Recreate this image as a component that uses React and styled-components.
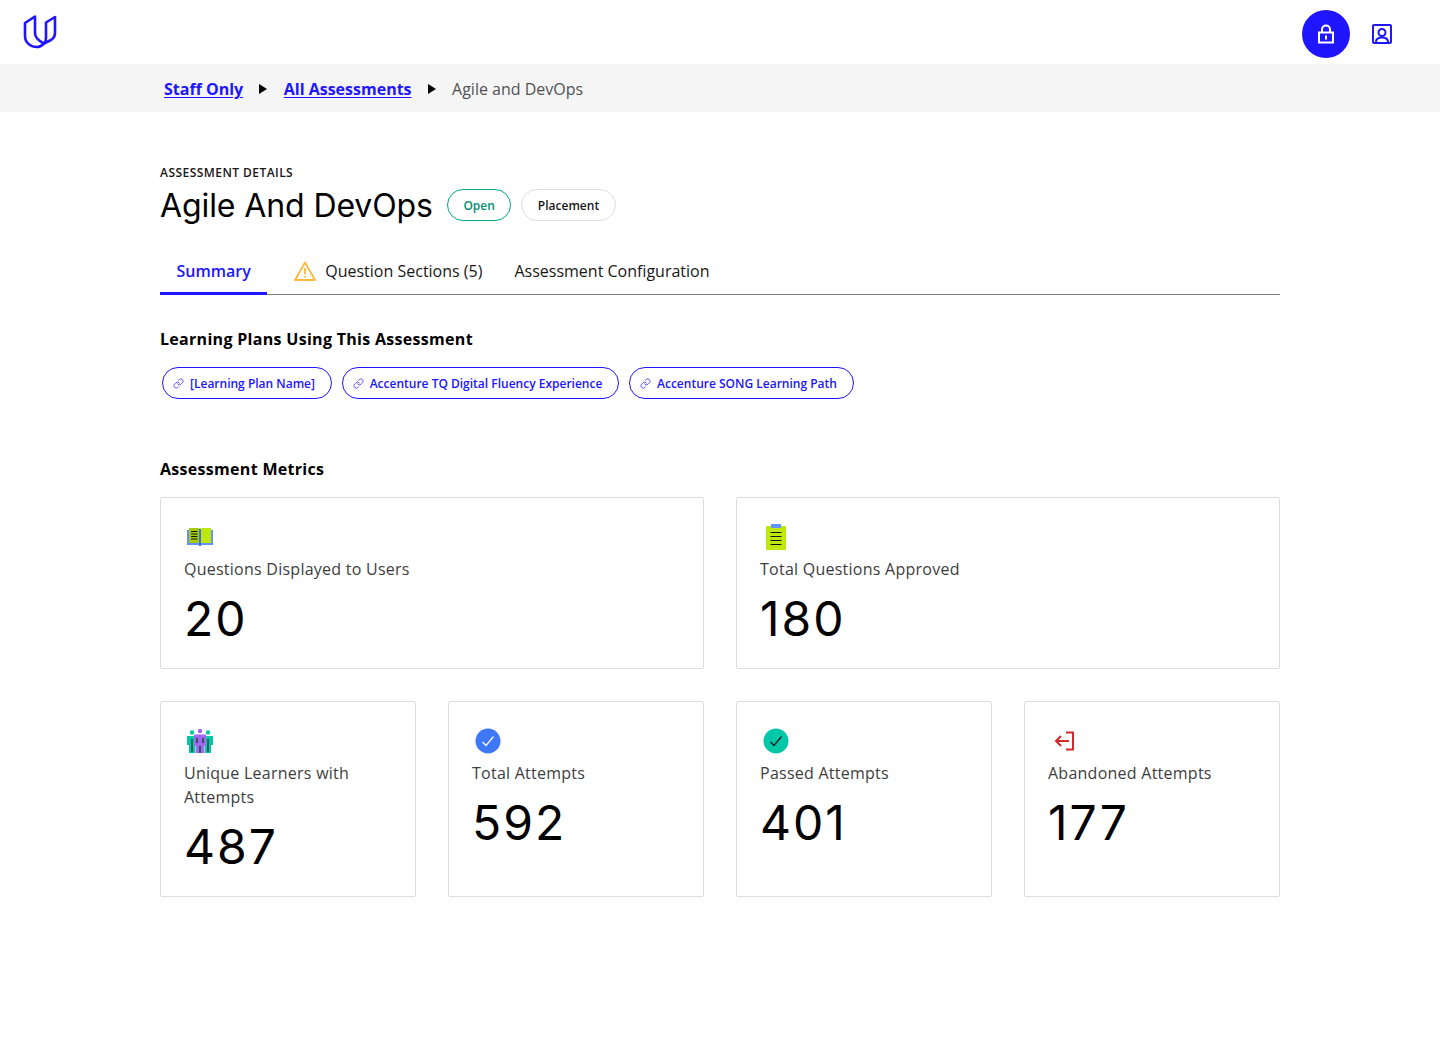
import React from "react";
import styled, { createGlobalStyle } from "styled-components";
import { Link } from "lucide-react";

const GlobalStyle = createGlobalStyle`
  html, body {
    margin: 0;
    padding: 0;
    background: #fff;
    font-family: "Open Sans", sans-serif;
    color: #000;
  }
  * { box-sizing: border-box; }
`;

const Page = styled.div`
  min-height: 1051px;
`;

const Header = styled.header`
  height: 64px;
  display: flex;
  align-items: flex-start;
  justify-content: space-between;
  padding: 10px 46px 0 22px;
`;

const Logo = styled.svg`
  width: 36px;
  height: 36px;
  margin-top: 4px;
`;

const HeaderActions = styled.div`
  display: flex;
  align-items: center;
  gap: 20px;
`;

const LockButton = styled.button`
  width: 48px;
  height: 48px;
  border: 0;
  border-radius: 50%;
  background: #2015ff;
  display: flex;
  align-items: center;
  justify-content: center;
  padding: 0;
`;

const ProfileButton = styled.button`
  width: 24px;
  height: 24px;
  border: 0;
  background: none;
  padding: 0;
  display: flex;
`;

const Breadcrumbs = styled.nav`
  height: 48px;
  background: #f5f5f5;
  display: flex;
  align-items: center;
  padding: 2px 0 0 164px;
  font-size: 16px;
`;

const Crumb = styled.a`
  color: #2015ff;
  font-weight: 700;
  text-decoration: underline;
  text-underline-offset: 2px;
`;

const CurrentCrumb = styled.span`
  color: #525252;
`;

const Arrow = styled.span`
  width: 0;
  height: 0;
  margin: 0 16.25px;
  border-style: solid;
  border-width: 5px 0 5px 8px;
  border-color: transparent transparent transparent #000;
`;

const Main = styled.main`
  width: 1120px;
  margin: 0 auto;
  padding-top: 52px;
`;

const Eyebrow = styled.div`
  font-size: 12px;
  line-height: 18px;
  letter-spacing: 0.45px;
  font-weight: 600;
  color: #171717;
`;

const TitleRow = styled.div`
  display: flex;
  align-items: center;
  gap: 10px;
  height: 46px;
`;

const Title = styled.h1`
  margin: 0 4px 0 0;
  padding-top: 2px;
  font-family: "Inter", sans-serif;
  font-size: 32px;
  font-weight: 400;
  letter-spacing: -0.1px;
  line-height: 44px;
  color: #000;
`;

const Badge = styled.span`
  height: 32px;
  display: inline-flex;
  align-items: center;
  padding: 0 15.5px;
  border-radius: 16px;
  border: 1px solid ${(p) => (p.$open ? "#02a888" : "#dedede")};
  color: ${(p) => (p.$open ? "#008f74" : "#171717")};
  font-size: 12px;
  font-weight: 600;
`;

const Tabs = styled.div`
  display: flex;
  margin-top: 21px;
  height: 46px;
  border-bottom: 1px solid #7d7d7d;
`;

const Tab = styled.div`
  height: 46px;
  padding: 0 16px 2px;
  display: flex;
  align-items: center;
  gap: 9px;
  font-size: 16px;
  color: #171717;
`;

const ActiveTab = styled(Tab)`
  padding: 0 16.5px;
  color: #2015ff;
  font-weight: 600;
  border-bottom: 3px solid #2015ff;
`;

const WarningTab = styled(Tab)`
  margin-left: 11px;
`;

const SectionTitle = styled.h2`
  margin: 0;
  font-size: 16px;
  line-height: 24px;
  font-weight: 700;
  letter-spacing: 0.3px;
  color: #000;
`;

const PlansTitle = styled(SectionTitle)`
  margin-top: 32px;
`;

const PlanRow = styled.div`
  display: flex;
  gap: 10px;
  margin-top: 16px;
  padding-left: 2px;
`;

const PlanPill = styled.a`
  height: 32px;
  display: inline-flex;
  align-items: center;
  gap: 6px;
  padding: 0 15.7px 0 10px;
  border: 1px solid #2015ff;
  border-radius: 16px;
  color: #2015ff;
  font-size: 12px;
  font-weight: 600;
`;

const MetricsTitle = styled(SectionTitle)`
  margin-top: 58px;
`;

const Grid = styled.div`
  display: grid;
  grid-template-columns: repeat(${(p) => p.$cols}, 1fr);
  gap: 32px;
  margin-top: ${(p) => p.$top}px;
`;

const Card = styled.div`
  border: 1px solid #dedede;
  border-radius: 2px;
  padding: 23px;
  height: ${(p) => p.$height}px;
`;

const IconSlot = styled.div`
  width: 32px;
  height: 32px;
  display: flex;
  align-items: center;
  justify-content: center;
`;

const CardLabel = styled.div`
  margin-top: 4px;
  font-size: 16px;
  line-height: 24px;
  letter-spacing: 0.25px;
  color: #3d3d3d;
`;

const CardValue = styled.div`
  margin-top: 10px;
  font-family: "Inter", sans-serif;
  font-size: 48px;
  line-height: 56px;
  letter-spacing: 2px;
  color: #000;
`;

const UdacityLogo = () => (
  <Logo viewBox="0 0 36 36" fill="none" stroke="#2015ff" strokeWidth="2.6" strokeLinejoin="round">
    <path d="M3 9 13 2.500V19c0 5 4 8 9 10.500-2.500 2.500-5 3.500-7 3.500C9 33 3 29 3 22Z" />
    <path d="M24 8.500 33 3v16c0 4-2 6-5 7.500l-6 3c1.500-1.500 2-3.500 2-5.500Z" />
  </Logo>
);

const LockIcon = () => (
  <svg width="18" height="20" viewBox="0 0 18 20" fill="none">
    <path d="M5 9V5.500a4 4 0 0 1 8 0V9" stroke="#fff" strokeWidth="2" />
    <rect x="2" y="8.500" width="14" height="10" fill="none" stroke="#fff" strokeWidth="2" />
    <rect x="8" y="11.500" width="2" height="4" fill="#fff" />
  </svg>
);

const ProfileIcon = () => (
  <svg width="24" height="24" viewBox="0 0 24 24" fill="none" stroke="#2015ff" strokeWidth="2">
    <rect x="3" y="3" width="18" height="18" rx="1" />
    <circle cx="12" cy="10.500" r="3.500" />
    <path d="M6 20c0-3 2.500-4.500 6-4.500s6 1.500 6 4.500" />
  </svg>
);

const WarningIcon = () => (
  <svg width="22" height="20" viewBox="0 0 22 20" fill="none">
    <path d="M11 1.500 1 19h20Z" stroke="#fbb83d" strokeWidth="1.800" strokeLinejoin="round" />
    <path d="M11 7v6.500M11 15v1.500" stroke="#fbb83d" strokeWidth="1.800" />
  </svg>
);

const BookIcon = () => (
  <svg width="28" height="20" viewBox="0 0 28 20">
    <rect x="1" y="3" width="26" height="15" fill="#6491ff" />
    <rect x="3" y="1" width="10.500" height="15" fill="#a4cc0a" />
    <rect x="14.500" y="1" width="10.500" height="15" fill="#bde80b" />
    <rect x="13" y="2" width="2" height="17" fill="#3d6fe8" />
    <path d="M5 4.500h6.500M5 7h6.500M5 9.500h6.500M5 12h6.500" stroke="#171717" strokeWidth="1.200" />
  </svg>
);

const ClipboardIcon = () => (
  <svg width="22" height="28" viewBox="0 0 22 28">
    <rect x="1" y="3" width="20" height="24" rx="1" fill="#bde80b" />
    <rect x="6" y="1" width="10" height="4" fill="#6491ff" />
    <path d="M5.500 9.500h11M5.500 13.500h11M5.500 17.500h11M5.500 21.500h11" stroke="#171717" strokeWidth="1.200" />
  </svg>
);

const PeopleIcon = () => (
  <svg width="28" height="26" viewBox="0 0 28 26">
    <circle cx="6" cy="4.500" r="2.200" fill="#02c8a7" />
    <circle cx="22" cy="4.500" r="2.200" fill="#02c8a7" />
    <circle cx="14" cy="3" r="2.200" fill="#a169f0" />
    <path d="M1 8h9v9H9v8H3v-8H1ZM18 8h9v9h-2v8h-6v-8h-1Z" fill="#02c8a7" />
    <path d="M8 6.500h12v11h-1.500V25H9.500v-7.500H8Z" fill="#a169f0" />
    <path d="M6 11v13M22 11v13M11 10v5M17 10v5M14 18v7" stroke="#10473f" strokeWidth="1.500" />
  </svg>
);

const CheckIcon = ({ fill, stroke }) => (
  <svg width="26" height="26" viewBox="0 0 26 26" fill="none">
    <circle cx="13" cy="13" r="12.500" fill={fill} />
    <path d="M7.500 14l3.500 3.500L18.500 8.500" stroke={stroke} strokeWidth="1.200" />
  </svg>
);

const ExitIcon = () => (
  <svg width="22" height="20" viewBox="0 0 22 20" fill="none" stroke="#d02b2b" strokeWidth="2">
    <path d="M13 1.500h7v17h-7" />
    <path d="M16 10H3M8 5 3 10l5 5" />
  </svg>
);

const plans = [
  "[Learning Plan Name]",
  "Accenture TQ Digital Fluency Experience",
  "Accenture SONG Learning Path",
];

const topMetrics = [
  { icon: <BookIcon />, label: "Questions Displayed to Users", value: "20" },
  { icon: <ClipboardIcon />, label: "Total Questions Approved", value: "180" },
];

const bottomMetrics = [
  { icon: <PeopleIcon />, label: "Unique Learners with Attempts", value: "487" },
  { icon: <CheckIcon fill="#3f78f6" stroke="#fff" />, label: "Total Attempts", value: "592" },
  { icon: <CheckIcon fill="#02c8a7" stroke="#171717" />, label: "Passed Attempts", value: "401" },
  { icon: <ExitIcon />, label: "Abandoned Attempts", value: "177" },
];

const Metric = ({ icon, label, value, height }) => (
  <Card $height={height}>
    <IconSlot>{icon}</IconSlot>
    <CardLabel>{label}</CardLabel>
    <CardValue>{value}</CardValue>
  </Card>
);

export default function App() {
  return (
    <Page>
      <GlobalStyle />
      <Header>
        <UdacityLogo />
        <HeaderActions>
          <LockButton>
            <LockIcon />
          </LockButton>
          <ProfileButton>
            <ProfileIcon />
          </ProfileButton>
        </HeaderActions>
      </Header>
      <Breadcrumbs>
        <Crumb>Staff Only</Crumb>
        <Arrow />
        <Crumb>All Assessments</Crumb>
        <Arrow />
        <CurrentCrumb>Agile and DevOps</CurrentCrumb>
      </Breadcrumbs>
      <Main>
        <Eyebrow>ASSESSMENT DETAILS</Eyebrow>
        <TitleRow>
          <Title>Agile And DevOps</Title>
          <Badge $open>Open</Badge>
          <Badge>Placement</Badge>
        </TitleRow>
        <Tabs>
          <ActiveTab>Summary</ActiveTab>
          <WarningTab>
            <WarningIcon />
            Question Sections (5)
          </WarningTab>
          <Tab>Assessment Configuration</Tab>
        </Tabs>
        <PlansTitle>Learning Plans Using This Assessment</PlansTitle>
        <PlanRow>
          {plans.map((plan) => (
            <PlanPill key={plan}>
              <Link size={11} strokeWidth={1.5} />
              {plan}
            </PlanPill>
          ))}
        </PlanRow>
        <MetricsTitle>Assessment Metrics</MetricsTitle>
        <Grid $cols={2} $top={16}>
          {topMetrics.map((m) => (
            <Metric key={m.label} {...m} height={172} />
          ))}
        </Grid>
        <Grid $cols={4} $top={32}>
          {bottomMetrics.map((m) => (
            <Metric key={m.label} {...m} height={196} />
          ))}
        </Grid>
      </Main>
    </Page>
  );
}
